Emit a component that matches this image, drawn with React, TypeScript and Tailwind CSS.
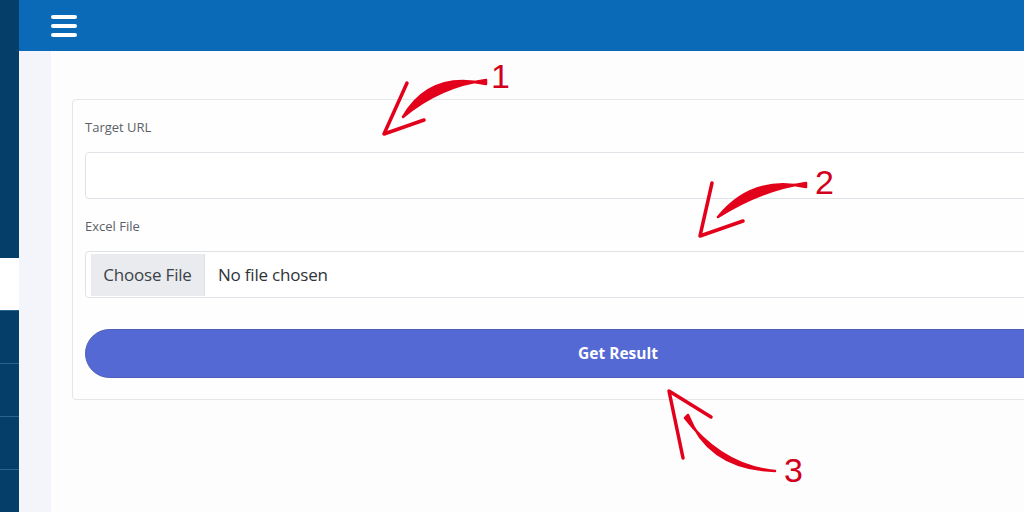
import React from 'react'

const font = { fontFamily: '"Open Sans", "Noto Sans", sans-serif' }

function Annotations() {
  const red = '#e3001b'
  return (
    <svg
      className="absolute inset-0 pointer-events-none"
      width={1024}
      height={512}
      viewBox="0 0 1024 512"
    >
      <g fill={red} stroke={red} strokeWidth={2.5} strokeLinejoin="round">
        {/* arrow 1 */}
        <path d="M486 84 Q430 71 403 117 Q440 86 486 80 Z" />
        {/* arrow 2 */}
        <path d="M806 187 Q752 175 718 217 Q760 190 806 183 Z" />
        {/* arrow 3 */}
        <path d="M688 415 Q709 469 775 471 Q722 466 685 418 Z" />
      </g>
      <g stroke={red} strokeWidth={3.5} fill="none" strokeLinecap="round" strokeLinejoin="round">
        <path d="M407 83 L384 134 L424 120" />
        <path d="M712 183 L700 236 L743 221" />
        <path d="M683 458 L669 391 L711 417" />
      </g>
      <g fill="#d1001c" fontFamily='"Liberation Sans", Arial, sans-serif' fontSize="34">
        <text x={491} y={88}>1</text>
        <text x={815} y={194}>2</text>
        <text x={784} y={482}>3</text>
      </g>
    </svg>
  )
}

export default function App() {
  return (
    <div className="relative w-[1024px] h-[512px] overflow-hidden flex bg-white" style={font}>
      {/* sidebar */}
      <div className="w-[19px] shrink-0 bg-[#053f69] flex flex-col">
        <div className="h-[258px]" />
        <div className="h-[52px] bg-white" />
        <div className="h-[53px] border-t border-[#2a6590]" />
        <div className="h-[53px] border-t border-[#2a6590]" />
        <div className="h-[53px] border-t border-[#2a6590]" />
        <div className="flex-1 border-t border-[#2a6590]" />
      </div>

      <div className="flex-1 flex flex-col min-w-0">
        {/* top bar */}
        <div className="h-[51px] shrink-0 bg-[#0b6ab7] flex items-center pl-[32px]">
          <div className="flex flex-col gap-[5px] w-[26px]">
            <span className="h-[4px] rounded-full bg-white" />
            <span className="h-[4px] rounded-full bg-white" />
            <span className="h-[4px] rounded-full bg-white" />
          </div>
        </div>

        <div className="flex-1 flex min-h-0">
          <div className="w-[32px] shrink-0 bg-[#f4f5fa]" />
          <div className="flex-1 bg-[#fdfdfe] pt-[48px] pl-[21px]">
            {/* card */}
            <div className="w-[1092px] border border-[#e4e6ea] rounded-[4px] bg-[#fefefe] px-[12px] pt-[17px] pb-[21px]">
              <div className="text-[13px] leading-[20px] text-[#5b6168]">Target URL</div>
              <div className="mt-[15px] h-[47px] border border-[#dfe2e6] rounded-[4px] bg-white" />

              <div className="mt-[17px] text-[13px] leading-[20px] text-[#5b6168]">Excel File</div>
              <div className="mt-[15px] h-[47px] border border-[#dfe2e6] rounded-[4px] bg-white flex items-center pl-[5px]">
                <div className="h-[42px] w-[114px] bg-[#e9ebee] border-r border-[#dcdfe3] flex items-center justify-center text-[17px] tracking-[-0.2px] text-[#3c4248]">
                  Choose File
                </div>
                <span className="ml-[13px] text-[17px] tracking-[-0.2px] text-[#2f3338]">No file chosen</span>
              </div>

              <button className="mt-[31px] w-full h-[49px] rounded-full bg-[#5569d5] border border-[#4d5fb8] text-white text-[15.5px] font-bold flex items-center justify-center">
                Get Result
              </button>
            </div>
          </div>
        </div>
      </div>

      <Annotations />
    </div>
  )
}
